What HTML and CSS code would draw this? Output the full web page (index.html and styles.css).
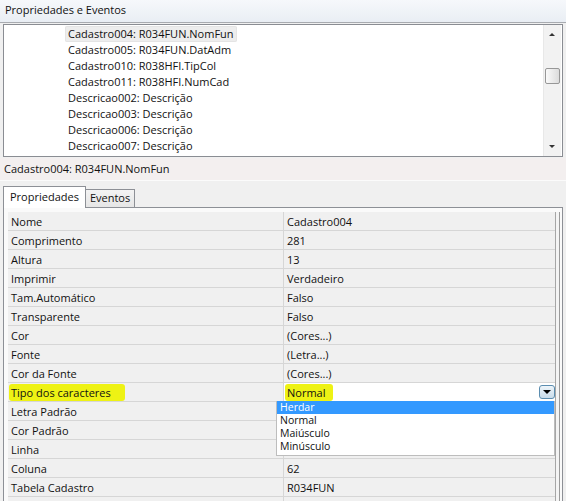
FILE: index.html
```html
<!DOCTYPE html>
<html>
<head>
<meta charset="utf-8">
<link rel="stylesheet" href="styles.css">
</head>
<body>
<div class="window">
  <div class="titlebar">Propriedades e Eventos</div>
  <div class="listbox">
    <div class="items">
      <div class="item selected">Cadastro004: R034FUN.NomFun</div>
      <div class="item">Cadastro005: R034FUN.DatAdm</div>
      <div class="item">Cadastro010: R038HFI.TipCol</div>
      <div class="item">Cadastro011: R038HFI.NumCad</div>
      <div class="item">Descricao002: Descrição</div>
      <div class="item">Descricao003: Descrição</div>
      <div class="item">Descricao006: Descrição</div>
      <div class="item">Descricao007: Descrição</div>
    </div>
    <div class="vscroll">
      <div class="arrow up"></div>
      <div class="track"><div class="thumb"></div></div>
      <div class="arrow down"></div>
    </div>
  </div>
  <div class="info">Cadastro004: R034FUN.NomFun</div>
  <div class="tabs">
    <div class="tab active">Propriedades</div>
    <div class="tab">Eventos</div>
  </div>
  <div class="frame">
    <div class="grid">
      <div class="cell">Nome</div><div class="cell">Cadastro004</div>
      <div class="cell">Comprimento</div><div class="cell">281</div>
      <div class="cell">Altura</div><div class="cell">13</div>
      <div class="cell">Imprimir</div><div class="cell">Verdadeiro</div>
      <div class="cell">Tam.Automático</div><div class="cell">Falso</div>
      <div class="cell">Transparente</div><div class="cell">Falso</div>
      <div class="cell">Cor</div><div class="cell">(Cores...)</div>
      <div class="cell">Fonte</div><div class="cell">(Letra...)</div>
      <div class="cell">Cor da Fonte</div><div class="cell">(Cores...)</div>
      <div class="cell"><span class="mark mark-left">Tipo dos caracteres</span></div>
      <div class="cell edit">
        <span class="mark mark-right">Normal</span>
        <span class="ddbtn"><span class="tri"></span></span>
        <div class="dropdown">
          <div class="opt sel">Herdar</div>
          <div class="opt">Normal</div>
          <div class="opt">Maiúsculo</div>
          <div class="opt">Minúsculo</div>
        </div>
      </div>
      <div class="cell">Letra Padrão</div><div class="cell"></div>
      <div class="cell">Cor Padrão</div><div class="cell"></div>
      <div class="cell">Linha</div><div class="cell"></div>
      <div class="cell">Coluna</div><div class="cell">62</div>
      <div class="cell">Tabela Cadastro</div><div class="cell">R034FUN</div>
      <div class="cell"></div><div class="cell"></div>
    </div>
  </div>
</div>
</body>
</html>
```

FILE: styles.css
```css
html, body {
  margin: 0;
  padding: 0;
}
body {
  width: 566px;
  height: 501px;
  overflow: hidden;
  background: #f0f0f0;
  font-family: "Open Sans", "Noto Sans", sans-serif;
  font-size: 11px;
  color: #111;
}
.window {
  display: flex;
  flex-direction: column;
  height: 501px;
}
.titlebar {
  height: 22px;
  line-height: 19px;
  padding-left: 5px;
  background: linear-gradient(#f6f8fb, #e9eef4);
  border-bottom: 1px solid #a8abb0;
  flex: none;
}
.listbox {
  flex: none;
  margin: 1px 3px 0 3px;
  height: 131px;
  border: 1px solid #8a8d93;
  background: #fff;
  display: flex;
}
.items {
  flex: 1;
  padding: 1px 0 0 61px;
  display: flex;
  flex-direction: column;
  align-items: flex-start;
}
.item {
  height: 16px;
  line-height: 16px;
  padding: 0 3px;
  border-radius: 2px;
  white-space: nowrap;
}
.item.selected {
  background: #ededed;
  box-shadow: inset 0 0 0 1px #e4e4e4;
}
.vscroll {
  width: 17px;
  background: #f2f2f2;
  border-left: 1px solid #e8e8e8;
  display: flex;
  flex-direction: column;
  margin-right: 1px;
}
.arrow {
  height: 17px;
  position: relative;
}
.arrow::after {
  content: "";
  position: absolute;
  left: 5px;
  width: 0;
  height: 0;
  border-left: 3px solid transparent;
  border-right: 3px solid transparent;
}
.arrow.up::after {
  top: 8px;
  border-bottom: 3px solid #333;
}
.arrow.down::after {
  top: 6px;
  border-top: 3px solid #333;
}
.track {
  flex: 1;
  padding-top: 26px;
}
.thumb {
  margin-left: 1px;
  width: 13px;
  height: 14px;
  border: 1px solid #979797;
  border-radius: 2px;
  background: linear-gradient(90deg, #fafafa, #dcdcdc);
}
.info {
  flex: none;
  height: 22px;
  line-height: 22px;
  padding-left: 4px;
  margin-top: 1px;
  background: #f3efef;
  border-bottom: 1px solid #fbfbfb;
}
.tabs {
  flex: none;
  display: flex;
  align-items: flex-end;
  padding: 5px 0 0 3px;
  height: 21px;
}
.tab {
  height: 17px;
  line-height: 16px;
  padding: 0 4px 0 4px;
  border: 1px solid #8d9096;
  border-bottom: none;
  border-left: none;
  background: linear-gradient(#f3f3f3, #e6e6e6);
}
.tab.active {
  height: 21px;
  line-height: 20px;
  padding: 0 6px 0 6px;
  background: #fff;
  border-left: 1px solid #8d9096;
  position: relative;
  top: 1px;
}
.frame {
  flex: 1;
  margin: 0 3px;
  border: 1px solid #8d9096;
  border-bottom: none;
  background: #fafafa;
  padding: 4px 4px 0 4px;
}
.grid {
  display: grid;
  grid-template-columns: 275px 1fr;
  column-gap: 1px;
  row-gap: 1px;
  background: #d6d6d6;
  border-right: 1px solid #a6a6a6;
  box-shadow: 3px 0 0 #f4f4f4, 4px 0 0 #9a9a9a;
  margin-right: 2px;
}
.cell {
  height: 18px;
  line-height: 19px;
  padding-left: 3px;
  background: #f0f0f0;
  white-space: nowrap;
  position: relative;
}
.cell.edit {
  background: #fff;
  overflow: visible;
}
.mark {
  background: #eef214;
  border-radius: 3px;
  padding: 1px 3px 1px 2px;
  margin-left: -2px;
}
.mark-left {
  padding-right: 14px;
}
.mark-right {
  padding-right: 8px;
}
.ddbtn {
  position: absolute;
  right: 0;
  top: 2px;
  width: 14px;
  height: 12px;
  border: 1px solid #5b8db0;
  border-radius: 3px;
  background: linear-gradient(#eef5fa, #c9dcea);
}
.tri {
  position: absolute;
  left: 3px;
  top: 4px;
  width: 0;
  height: 0;
  border-left: 4px solid transparent;
  border-right: 4px solid transparent;
  border-top: 4px solid #000;
}
.dropdown {
  position: absolute;
  left: -8px;
  top: 18px;
  right: 0;
  background: #fff;
  border: 1px solid #bdbdbd;
  border-top: none;
  padding-bottom: 2px;
  z-index: 5;
}
.opt {
  height: 13px;
  line-height: 13px;
  font-size: 10.5px;
  padding-left: 3px;
  overflow: hidden;
}
.opt.sel {
  background: #3399ff;
  color: #fff;
}
```
